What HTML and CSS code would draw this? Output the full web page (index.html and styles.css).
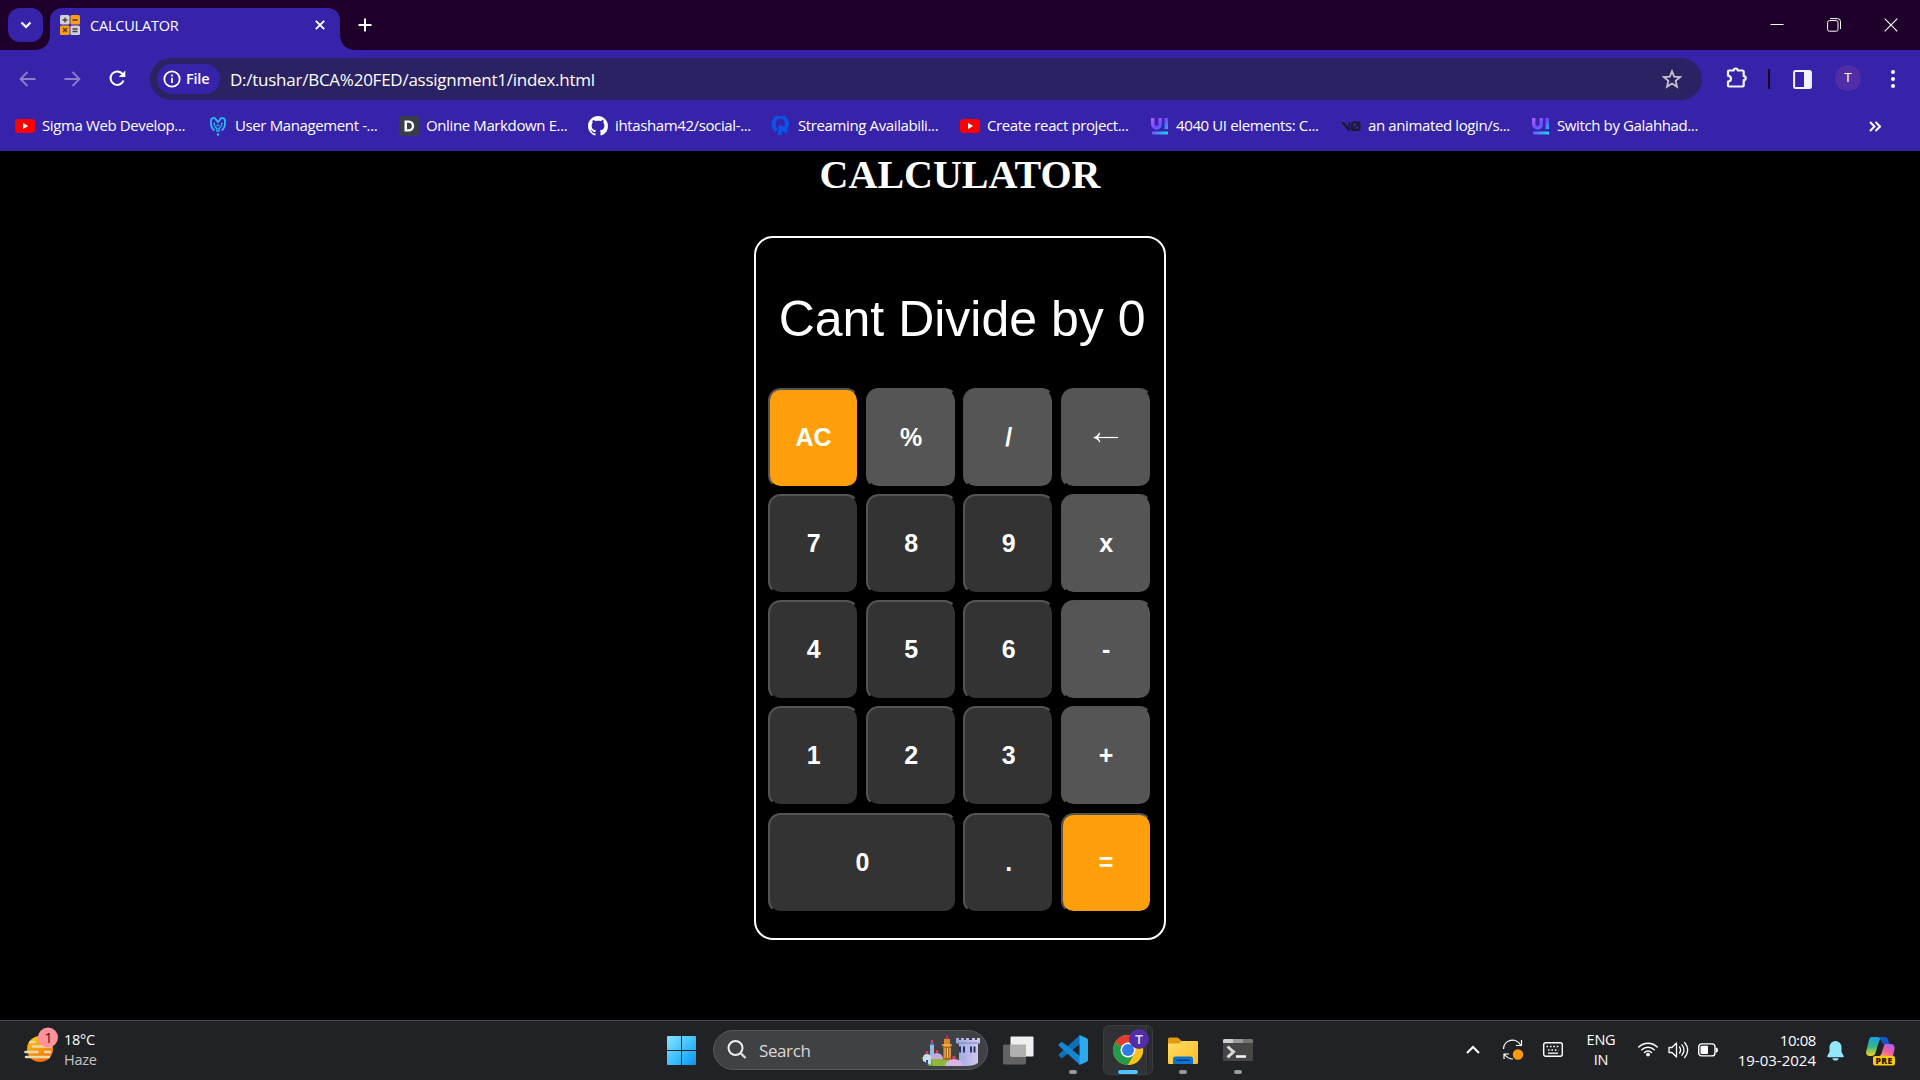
FILE: index.html
```html
<!DOCTYPE html>
<html lang="en">
<head>
<meta charset="utf-8">
<title>CALCULATOR</title>
<link rel="stylesheet" href="styles.css">
</head>
<body>
<svg width="0" height="0" class="defs" aria-hidden="true">
  <defs>
    <linearGradient id="gUi" x1="0" y1="0" x2="1" y2="1"><stop offset="0" stop-color="#b45cf5"/><stop offset=".55" stop-color="#6b4bff"/><stop offset="1" stop-color="#20b8f5"/></linearGradient>
    <linearGradient id="gBar" x1="0" x2="1"><stop offset="0" stop-color="#6a5cff"/><stop offset="1" stop-color="#12d8f5"/></linearGradient>
    <linearGradient id="gWin" gradientUnits="userSpaceOnUse" x1="0" y1="0" x2="29" y2="29"><stop offset="0" stop-color="#8be2ff"/><stop offset=".5" stop-color="#3fc3fb"/><stop offset="1" stop-color="#0a93f5"/></linearGradient>
    <linearGradient id="gSun" x1=".3" y1="0" x2=".7" y2="1"><stop offset="0" stop-color="#ffc510"/><stop offset="1" stop-color="#f26a10"/></linearGradient>
    <linearGradient id="gFold" x1="0" y1="0" x2="1" y2="1"><stop offset="0" stop-color="#ffdc62"/><stop offset="1" stop-color="#fdbd28"/></linearGradient>
    <linearGradient id="gTower" x1="0" x2="1"><stop offset="0" stop-color="#98a9dc"/><stop offset="1" stop-color="#d8c8f2"/></linearGradient>
    <linearGradient id="gCoA" x1="0" y1="0" x2="0" y2="1"><stop offset="0" stop-color="#1aa0e8"/><stop offset=".5" stop-color="#35b58b"/><stop offset="1" stop-color="#f5d516"/></linearGradient>
    <linearGradient id="gCoB" x1=".8" y1="0" x2=".2" y2="1"><stop offset="0" stop-color="#b05cf0"/><stop offset=".6" stop-color="#ef5fa0"/><stop offset="1" stop-color="#ff9a5a"/></linearGradient>
    <symbol id="yt" viewBox="0 0 20 20"><rect y="3" width="20" height="14" rx="3.5" fill="#f00"/><path d="M8 7l5.2 3L8 13z" fill="#fff"/></symbol>
    <symbol id="ui" viewBox="0 0 18 18"><path d="M0 1h3.500v6a2 2 0 0 0 4 0V1H11v6.200a5.300 5.300 0 0 1-11 0zM13.500 1H17v11h-3.500z" fill="url(#gUi)"/><path d="M1 14.500h16v3H2a1 1 0 0 1-1-1z" fill="url(#gBar)"/></symbol>
  </defs>
</svg>

<header class="browser">
  <div class="tabstrip">
    <button class="tab-search"><svg width="12" height="8" viewBox="0 0 12 8"><path d="M1.500 1.500L6 6l4.500-4.500" fill="none" stroke="#fff" stroke-width="2.200"/></svg></button>
    <div class="tab">
      <svg width="20" height="20" viewBox="0 0 20 20"><rect width="9.600" height="9.600" rx="1.500" fill="#cfd3d6"/><rect x="10.400" width="9.600" height="9.600" rx="1.500" fill="#ff9d0a"/><rect y="10.400" width="9.600" height="9.600" rx="1.500" fill="#ff9d0a"/><rect x="10.400" y="10.400" width="9.600" height="9.600" rx="1.500" fill="#cfd3d6"/><path d="M2.500 5h5M5 2.500v5M12.500 5h5M3 13l4 4M7 13l-4 4M12.500 14h5M12.500 16.500h5" stroke="#4a3a35" stroke-width="1.300"/></svg>
      <span class="tab-title">CALCULATOR</span>
      <svg class="tab-close" width="10" height="10" viewBox="0 0 10 10"><path d="M.8.8l8.400 8.400M9.200.8L.8 9.200" stroke="#fff" stroke-width="1.900"/></svg>
    </div>
    <svg class="new-tab" width="14" height="14" viewBox="0 0 14 14"><path d="M7 .5v13M.5 7h13" stroke="#fff" stroke-width="2"/></svg>
    <div class="window-controls">
      <svg width="14" height="14" viewBox="0 0 14 14"><path d="M.5 6.500h13" stroke="#fff"/></svg>
      <svg width="14" height="14" viewBox="0 0 14 14"><rect x=".6" y="2.600" width="10.400" height="10.600" rx="1.800" fill="none" stroke="#fff"/><path d="M3 .6h7.500a3 3 0 0 1 3 3V11" fill="none" stroke="#fff"/></svg>
      <svg width="14" height="14" viewBox="0 0 14 14"><path d="M.7.700l12.600 12.600M13.300.7L.7 13.300" stroke="#fff" stroke-width="1.100"/></svg>
    </div>
  </div>

  <div class="toolbar">
    <svg class="back" width="17" height="16" viewBox="0 0 17 16"><path d="M16.500 8H2M8.500 1L1.500 8l7 7" fill="none" stroke="#8d7ec9" stroke-width="1.800"/></svg>
    <svg class="forward" width="17" height="16" viewBox="0 0 17 16"><path d="M.5 8H15M8.500 1l7 7-7 7" fill="none" stroke="#8d7ec9" stroke-width="1.800"/></svg>
    <svg class="reload" width="17" height="17" viewBox="0 0 17 17"><path d="M14.500 10.500A6.700 6.700 0 1 1 13.600 4.200" fill="none" stroke="#fff" stroke-width="2"/><path d="M16.300.5v6.500h-6.500z" fill="#fff"/></svg>
    <div class="omnibox">
      <div class="chip">
        <svg width="18" height="18" viewBox="0 0 18 18"><circle cx="9" cy="9" r="7.700" fill="none" stroke="#fff" stroke-width="1.800"/><path d="M9 7.800V13M9 4.500v1.900" stroke="#fff" stroke-width="1.700"/></svg>
        <span>File</span>
      </div>
      <span class="url">D:/tushar/BCA%20FED/assignment1/index.html</span>
      <svg class="star" width="20" height="20" viewBox="0 0 20 20"><path d="M10 2.300l2.200 5.400 5.900.4-4.500 3.800 1.400 5.800-5-3.200-5 3.200 1.400-5.800L1.900 8.100l5.900-.4z" fill="none" stroke="#c5c4c8" stroke-width="1.800"/></svg>
    </div>
    <svg class="extensions" width="22" height="22" viewBox="0 0 22 22"><path d="M2 4.500a1 1 0 0 1 1-1h4.700a2 2 0 0 1 4 0h5a1 1 0 0 1 1 1v4.700a2 2 0 0 1 0 4v5.300a1 1 0 0 1-1 1H3a1 1 0 0 1-1-1v-3.800q3-.6 3-3t-3-3z" fill="none" stroke="#f1f1f8" stroke-width="2.200" stroke-linejoin="round"/></svg>
    <span class="divider"></span>
    <svg class="side-panel" width="19" height="19" viewBox="0 0 19 19"><rect x="1.100" y="1.100" width="16.800" height="16.800" rx="1.500" fill="none" stroke="#f4f4f8" stroke-width="2"/><path d="M11 1h7v17h-7z" fill="#f4f4f8"/></svg>
    <span class="avatar">T</span>
    <svg class="menu" width="4" height="18" viewBox="0 0 4 18"><g fill="#fff"><circle cx="2" cy="2" r="2"/><circle cx="2" cy="9" r="2"/><circle cx="2" cy="16" r="2"/></g></svg>
  </div>

  <nav class="bookmarks">
    <a class="bm"><svg width="20" height="20"><use href="#yt"/></svg><span>Sigma Web Develop...</span></a>
    <a class="bm"><svg width="20" height="20" viewBox="0 0 20 20"><path d="M6.500 14.500Q3 12 3 7V4.500a2.600 2.600 0 0 1 5-.8L10 6l2-2.300a2.600 2.600 0 0 1 5 .8V7q0 5-3.500 7.500" fill="none" stroke="#2db4f2" stroke-width="1.900"/><path d="M6 6.500q.5 5 3 6v3.500M14 6.500q-.5 5-3 6v3.500M8.500 9.500h3" fill="none" stroke="#2db4f2" stroke-width="1.400"/><circle cx="10" cy="18.600" r="1.300" fill="#2db4f2"/></svg><span>User Management -...</span></a>
    <a class="bm"><svg width="20" height="20" viewBox="0 0 20 20"><rect width="20" height="20" rx="3" fill="#373d49"/><path d="M5.500 4.500h4.200a5.500 5.500 0 0 1 0 11H5.500zM8 6.700v6.600h1.500a3.300 3.300 0 0 0 0-6.600z" fill="#fff" fill-rule="evenodd"/></svg><span>Online Markdown E...</span></a>
    <a class="bm"><svg width="20" height="20" viewBox="0 0 16 16"><path fill="#fff" d="M8 0C3.580 0 0 3.580 0 8c0 3.540 2.290 6.530 5.470 7.590.4.070.55-.17.55-.38 0-.19-.01-.82-.01-1.490-2.010.37-2.530-.49-2.690-.94-.09-.23-.48-.94-.82-1.130-.28-.15-.68-.52-.01-.53.63-.01 1.080.58 1.230.82.72 1.210 1.870.87 2.330.66.070-.52.28-.87.51-1.070-1.780-.2-3.640-.89-3.640-3.950 0-.87.31-1.590.82-2.150-.08-.2-.36-1.020.08-2.120 0 0 .67-.21 2.200.82.64-.18 1.320-.27 2-.27s1.360.09 2 .27c1.530-1.040 2.200-.82 2.200-.82.44 1.100.16 1.920.08 2.120.51.56.82 1.270.82 2.150 0 3.070-1.870 3.750-3.650 3.950.29.25.54.73.54 1.480 0 1.070-.01 1.930-.01 2.200 0 .21.15.46.55.38A8.010 8.010 0 0 0 16 8c0-4.420-3.580-8-8-8z"/></svg><span>ihtasham42/social-...</span></a>
    <a class="bm"><svg width="20" height="20" viewBox="0 0 20 20"><path d="M5.500 14.500Q2 11.500 2.800 7A6.600 6.600 0 1 1 12 13.500l4.500 2.200M10 9.500L8.500 19" fill="none" stroke="#0a55e6" stroke-width="4"/></svg><span>Streaming Availabili...</span></a>
    <a class="bm"><svg width="20" height="20"><use href="#yt"/></svg><span>Create react project...</span></a>
    <a class="bm"><svg width="18" height="18"><use href="#ui"/></svg><span>4040 UI elements: C...</span></a>
    <a class="bm"><svg width="20" height="12" viewBox="0 0 20 12"><path d="M0 2h3l4.500 5V2H9v9H7.500z" fill="#1a1b26"/><rect x="11" y="2.500" width="7.500" height="7.500" rx="2" fill="none" stroke="#1a1b26" stroke-width="2.200"/><path d="M11 10.500L19 2" stroke="#1a1b26" stroke-width="1.800"/></svg><span>an animated login/s...</span></a>
    <a class="bm"><svg width="18" height="18"><use href="#ui"/></svg><span>Switch by Galahhad...</span></a>
    <svg class="overflow" width="12" height="11" viewBox="0 0 12 11"><path d="M1 1l4.500 4.500L1 10M6.500 1L11 5.500 6.500 10" fill="none" stroke="#fff" stroke-width="2"/></svg>
  </nav>
</header>

<main class="page">
  <h1>CALCULATOR</h1>
  <section class="calculator">
    <div class="display">Cant Divide by 0</div>
    <div class="keys">
      <button class="key accent">AC</button><button class="key op">%</button><button class="key op">/</button><button class="key op"><svg width="26" height="12" viewBox="0 0 26 12"><path d="M2 6.500h23" stroke="#fff" stroke-width="1.200"/><path d="M0 6.500Q4.500 5 6.500 1.500l.8.500Q6.500 4.500 4.800 6.500q1.700 2 2.500 4.500l-.8.500Q4.500 8 0 6.500z" fill="#fff"/></svg></button>
      <button class="key">7</button><button class="key">8</button><button class="key">9</button><button class="key op">x</button>
      <button class="key">4</button><button class="key">5</button><button class="key">6</button><button class="key op">-</button>
      <button class="key">1</button><button class="key">2</button><button class="key">3</button><button class="key op">+</button>
      <button class="key wide">0</button><button class="key">.</button><button class="key accent">=</button>
    </div>
  </section>
</main>

<footer class="taskbar">
  <div class="weather">
    <svg width="36" height="36" viewBox="0 0 36 36"><circle cx="16" cy="22" r="13" fill="url(#gSun)"/><path d="M6.500 15h4M9 19.500h18M1.500 25h12M21 25h5M2 30h23" stroke="#e9d9a8" stroke-width="2.600" stroke-linecap="round"/><circle cx="24" cy="10.500" r="10" fill="#ff929c"/><text x="24.500" y="15.500" text-anchor="middle" class="badge-num">1</text></svg>
    <div class="weather-text"><span>18°C</span><span class="dim">Haze</span></div>
  </div>
  <div class="apps">
    <svg class="start" width="29" height="29" viewBox="0 0 29 29"><path d="M1 0h13v14H0V1a1 1 0 0 1 1-1zM15 0h13a1 1 0 0 1 1 1v13H15zM0 15h14v14H1a1 1 0 0 1-1-1zM15 15h14v13a1 1 0 0 1-1 1H15z" fill="url(#gWin)"/></svg>
    <div class="search">
      <svg width="20" height="20" viewBox="0 0 20 20"><circle cx="8.500" cy="8" r="7" fill="none" stroke="#eee" stroke-width="2"/><path d="M13.500 13l5 5" stroke="#ddd" stroke-width="2.400"/></svg>
      <span>Search</span>
      <svg class="castle" width="60" height="32" viewBox="0 0 60 32">
        <path d="M0 24l6-3 10 2 12 0v9H8z" fill="#6b9d2c"/><path d="M10 24q8-3 17 0l-2 8H12z" fill="#8eb93a"/>
        <path d="M9 11h4v13H9z" fill="#9db9de"/><path d="M8.500 11l2.500-4 2.500 4z" fill="#5773b3"/><circle cx="11" cy="7" r="1.300" fill="#e23b5c"/>
        <path d="M22 12h8v14h-8z" fill="#a86a24"/><path d="M23 5h6v8h-6z" fill="#d98b2b"/><path d="M24 5l2-5 2 5z" fill="#b23248"/><path d="M24 14v10M26.500 14v10M29 14v10" stroke="#ffc94b"/><path d="M21 11h10" stroke="#f6b24c" stroke-width="1.500"/>
        <path d="M10 25a6 6 0 0 1 12 0z" fill="#c9a9df"/><circle cx="16" cy="17.500" r="1.400" fill="#e23b5c"/>
        <path d="M2 24a4 4 0 0 1 8 0v7l-8-4z" fill="#c9ddf3"/><path d="M5 26h2v4H5z" fill="#27518f"/><circle cx="6" cy="18.500" r="1.400" fill="#e23b5c"/>
        <path d="M35 4h3v2h2V4h3v2h2V4h3v2h3V4h3v2h2V4h3v5l-2 1v19q-4 3-12 3H38V10l-3-1z" fill="url(#gTower)"/><path d="M36 9h22" stroke="#7286c2"/><path d="M39 12.500v6M43 12.500v6M50 12.500v6M53.500 12.500v6" stroke="#273463" stroke-width="2"/>
        <path d="M24 32a9 7 0 0 1 18 0z" fill="#d7b5e4"/><circle cx="33" cy="23.500" r="1.800" fill="#e23b5c"/>
      </svg>
    </div>
    <svg class="task-view" width="31" height="29" viewBox="0 0 31 29"><rect y="8.500" width="23" height="20" rx="1.500" fill="#626262"/><rect x="7.500" y=".5" width="23" height="20" rx="1" fill="#efefef"/><path d="M7.500 8.500H23v12H8.500a1 1 0 0 1-1-1z" fill="#b0b0b0"/></svg>
    <div class="app vscode"><svg width="30" height="30" viewBox="0 0 30 30"><path d="M22 0L1 19q-1 1 0 2l2 1.800q.8.600 1.700 0L22 9z" fill="#0e70b8"/><path d="M22 30L1 11q-1-1 0-2l2-1.800q.8-.6 1.700 0L22 21z" fill="#1686d0"/><path d="M21.500 0l7.300 3.300Q30 4 30 5v20q0 1-1.200 1.700L21.500 30z" fill="#2baaf2"/></svg><i></i></div>
    <div class="app chrome active"><svg width="42" height="42" viewBox="0 0 42 42"><g transform="translate(6 9)"><circle cx="15" cy="15" r="15" fill="#fbc116"/><path d="M15 15L2 7.500A15 15 0 0 1 28 7.500z" fill="#e33b2e"/><path d="M2 7.500A15 15 0 0 0 15 30l6.500-11.200L15 15z" fill="#269a48"/><path d="M15 7.500h13a15 15 0 0 1-13 22.500l6.500-11.300z" fill="#fbc116"/><circle cx="15" cy="15" r="7.500" fill="#fff"/><circle cx="15" cy="15" r="6" fill="#3079ea"/></g><circle cx="32" cy="13" r="10" fill="#512da8"/><text x="32" y="18" text-anchor="middle" class="badge-t">T</text></svg><i></i></div>
    <div class="app folder"><svg width="30" height="28" viewBox="0 0 30 28"><path d="M0 2a1.500 1.500 0 0 1 1.500-1.500H9q1 0 2 1L13.500 4H28v10H0z" fill="#e09b13"/><path d="M0 6.500h11L14 4h15q1 0 1 1v21q0 1-1 1H1q-1 0-1-1z" fill="url(#gFold)"/><path d="M5 27v-5a2.500 2.500 0 0 1 2.500-2.500h15A2.500 2.500 0 0 1 25 22v5z" fill="#0e74cf"/><path d="M9 23.300h12" stroke="#07427f" stroke-width="1.400" stroke-linecap="round"/></svg><i></i></div>
    <div class="app terminal"><svg width="30" height="24" viewBox="0 0 30 24"><rect y="1" width="30" height="22" rx="1.500" fill="#464646"/><path d="M1 1h9v4H0V2z" fill="#d0d0d0"/><path d="M10 1h10v4H10z" fill="#9a9a9a"/><path d="M20 1h9l1 1v3H20z" fill="#727272"/><path d="M4.500 8.500l6 5.300-6 5.500" fill="none" stroke="#d8d8d8" stroke-width="3"/><path d="M13 18.500h10" stroke="#f2f2f2" stroke-width="2.600"/></svg><i></i></div>
  </div>
  <div class="tray">
    <svg class="chev" width="14" height="9" viewBox="0 0 14 9"><path d="M1 8l6-6 6 6" fill="none" stroke="#fff" stroke-width="2"/></svg>
    <svg class="sync" width="22" height="22" viewBox="0 0 22 22"><path d="M1.500 10A9 9 0 0 1 18.500 6M19.500 1v5.500H14M2 20v-5h5M2.500 15.500Q6 20 11 20" fill="none" stroke="#fff" stroke-width="1.200"/><circle cx="16" cy="15.500" r="5.200" fill="#ff9a0a"/></svg>
    <svg class="keyboard" width="20" height="15" viewBox="0 0 20 15"><rect x=".7" y=".7" width="18.600" height="13.600" rx="2" fill="none" stroke="#fff" stroke-width="1.400"/><path d="M3.500 4.500h13M5 8h10.500" stroke="#fff" stroke-width="1.600" stroke-dasharray="1.600 1.800"/><path d="M5 11.200h10" stroke="#fff" stroke-width="1.300"/></svg>
    <div class="lang"><span>ENG</span><span>IN</span></div>
    <svg class="wifi" width="20" height="16" viewBox="0 0 20 16"><path d="M.8 6A13 13 0 0 1 19.200 6M3.800 8.800a8.800 8.800 0 0 1 12.400 0M6.600 11.500a4.800 4.800 0 0 1 6.800 0" fill="none" stroke="#fff" stroke-width="1.500" stroke-linecap="round"/><circle cx="10" cy="13.600" r="1.900" fill="#fff"/></svg>
    <svg class="volume" width="21" height="18" viewBox="0 0 21 18"><path d="M1 6.500h3L8.500 2v14L4 11.500H1z" fill="none" stroke="#fff" stroke-width="1.300" stroke-linejoin="round"/><path d="M11.500 6q2.200 3 0 6M14 3.800q4 5.200 0 10.400M16.700 1.500q6 7.500 0 15" fill="none" stroke="#fff" stroke-width="1.300" stroke-linecap="round"/></svg>
    <svg class="battery" width="20" height="14" viewBox="0 0 20 14"><rect x=".7" y=".9" width="16.300" height="12" rx="3" fill="none" stroke="#fff" stroke-width="1.400"/><rect x="2.500" y="2.800" width="7.500" height="8.200" rx="1" fill="#fff"/><path d="M18 4.500q2 0 2 2.500t-2 2.500z" fill="#fff"/></svg>
    <div class="clock"><span class="time">10:08</span><span>19-03-2024</span></div>
    <svg class="bell" width="17" height="20" viewBox="0 0 17 20"><path d="M8.500 0a6 6 0 0 1 6 6v5l2.200 4q.4 1.200-1 1.200H1.300Q0 16.200.3 15l2.200-4V6a6 6 0 0 1 6-6zM5.500 17.300h6a3 2.300 0 0 1-6 0z" fill="#93e7fd"/></svg>
    <svg class="copilot" width="30" height="30" viewBox="0 0 30 30"><path d="M5 1h12q-3 1-4.500 6l-3 10q-1 3-4 3H3q-4-1-2.500-6L3 4q.6-2.500 2-3z" fill="url(#gCoA)"/><path d="M12 1h7q2.500 0 3.500 4l1 3h-6.500q-1-4-5-7z" fill="#1257d0"/><path d="M19 8h7q3 1 2.500 5l-1.500 7H13q2 0 3-4l1.500-5q.3-2 1.500-3z" fill="url(#gCoB)"/><rect x="7" y="20" width="22" height="9.500" rx="2" fill="#ffca0a"/><text x="18" y="27.800" text-anchor="middle" class="pre">PRE</text></svg>
  </div>
</footer>
</body>
</html>
```
FILE: styles.css
```css
* { box-sizing: border-box; }
body {
  margin: 0;
  height: 1080px;
  display: grid;
  grid-template-rows: 151px 869px 60px;
  overflow: hidden;
  background: #000;
  color: #fff;
  font-family: "Open Sans", "Noto Sans", sans-serif;
}
svg { display: block; flex: none; }
.defs { position: absolute; }
button { font: inherit; color: inherit; padding: 0; }

/* Browser chrome */
.browser { background: #3623a9; overflow: hidden; }
.tabstrip {
  height: 50px;
  display: flex;
  align-items: center;
  padding-left: 8px;
  background: #1f002b;
}
.tab-search {
  width: 35px;
  height: 34px;
  display: grid;
  place-items: center;
  border: 0;
  border-radius: 12px;
  background: #3623a9;
}
.tab {
  position: relative;
  align-self: flex-end;
  width: 290px;
  height: 42px;
  margin-left: 7px;
  padding: 0 15px 8px 10px;
  display: flex;
  align-items: center;
  border-radius: 12px 12px 0 0;
  background: #3623a9;
}
.tab::before, .tab::after {
  content: "";
  position: absolute;
  bottom: 0;
  width: 14px;
  height: 14px;
}
.tab::before { left: -14px; background: radial-gradient(circle at 0 0, transparent 13.500px, #3623a9 14px); }
.tab::after { right: -14px; background: radial-gradient(circle at 100% 0, transparent 13.500px, #3623a9 14px); }
.tab-title { margin-left: 10px; font-size: 14.500px; letter-spacing: -.2px; }
.tab-close { margin-left: auto; }
.new-tab { margin-left: 18px; }
.window-controls { margin-left: auto; margin-right: 22px; display: flex; gap: 43px; }

.toolbar { height: 58px; padding-top: 8px; display: flex; align-items: flex-start; }
.toolbar > svg { margin-top: 13px; }
.back { margin-left: 19px; }
.forward { margin-left: 28px; }
.toolbar > .reload { margin-left: 28px; margin-top: 12px; }
.omnibox {
  width: 1552px;
  height: 42px;
  margin-left: 24px;
  padding: 0 20px 0 7px;
  display: flex;
  align-items: center;
  border-radius: 21px;
  background: #2b2263;
}
.chip {
  width: 63px;
  height: 30px;
  padding-left: 6px;
  display: flex;
  align-items: center;
  gap: 5px;
  border-radius: 15px;
  background: #3623a9;
  font-size: 14.500px;
  font-weight: 600;
  letter-spacing: -.2px;
}
.chip span { margin-top: -2px; }
.url { margin-left: 10px; font-size: 17px; letter-spacing: -.25px; }
.star { margin-left: auto; }
.toolbar > .extensions { margin-left: 24px; margin-top: 9px; }
.divider { width: 2px; height: 20px; margin: 11px 0 0 20px; background: #1f002b; }
.toolbar > .side-panel { margin-left: 23px; margin-top: 12px; }
.avatar {
  width: 26px;
  height: 26px;
  margin: 7px 0 0 23px;
  border-radius: 50%;
  background: #512da8;
  font: 13px/26px Roboto, sans-serif;
  text-align: center;
}
.toolbar > .menu { margin-left: 30px; margin-top: 12px; }

.bookmarks {
  height: 43px;
  padding: 0 39px 7px 15px;
  display: grid;
  grid-template-columns: 193px 191px 189px 183px 189px 191px 190px 191px 1fr 12px;
  align-items: center;
  font-size: 15px;
  letter-spacing: -.38px;
}
.bm { display: flex; align-items: center; white-space: nowrap; }
.bm span { margin: -3px 0 0 7px; }

/* Calculator page */
.page { overflow: hidden; display: flex; flex-direction: column; align-items: center; }
h1 { margin: 1px 0 38px; font: bold 40px/46px "Liberation Serif", serif; }
.calculator {
  width: 412px;
  height: 704px;
  padding: 0 12px;
  border: 2px solid #fff;
  border-radius: 19px;
  font-family: "Liberation Sans", sans-serif;
}
.display { height: 149.600px; padding: 52px 6.500px 0 0; font-size: 50px; line-height: 58px; text-align: right; white-space: nowrap; }
.keys { display: grid; grid-template-columns: repeat(4, 91.250px); grid-auto-rows: 100px; gap: 6.250px; }
.key {
  display: grid;
  place-items: center;
  padding-bottom: 1px;
  border: 2px outset #000;
  border-radius: 12.500px;
  background: #333;
  font-size: 25px;
  font-weight: bold;
}
.op { background: #555; }
.accent { background: #ff9f0c; }
.wide { grid-column: span 2; }

/* Taskbar */
.taskbar {
  display: grid;
  grid-template-columns: 667px 799px 1fr;
  border-top: 1px solid #46474a;
  background: #212225;
  font-size: 14.500px;
}
.weather { display: flex; padding: 6px 0 0 24px; }
.weather-text { margin: 3px 0 0 4px; display: flex; flex-direction: column; line-height: 20px; letter-spacing: -.25px; }
.dim { color: #c4c4c4; }
.badge-num { font-size: 14px; fill: #2b1418; }
.apps { display: flex; }
.start { margin-top: 15px; }
.search {
  width: 275px;
  height: 40px;
  margin: 9px 0 0 17px;
  padding: 0 6px 0 13px;
  display: flex;
  align-items: center;
  border: 1px solid #57585c;
  border-radius: 20px;
  background: #404145;
  color: #d8d8d8;
  font-size: 17px;
  letter-spacing: -.4px;
}
.search span { margin-left: 12px; }
.castle { margin-left: auto; }
.task-view { margin: 15px 0 0 15px; }
.app { width: 50px; height: 50px; margin-top: 4px; display: flex; flex-direction: column; align-items: center; justify-content: space-between; padding: 10px 0 1px; }
.app i { width: 8px; height: 4px; border-radius: 2px; background: #999; }
.vscode { margin-left: 14px; }
.chrome {
  margin-left: 5px;
  padding-top: 1px;
  border: 1px solid #3b3c3f;
  border-radius: 6px;
  background: linear-gradient(90deg, #303134 42px, #3b3c3f 42px 43px, #232427 43px 44px, #2b2c2f 44px);
}
.chrome svg { margin-top: -1px; }
.active i { width: 20px; background: #4cc2ff; }
.chrome i { margin-bottom: -1px; }
.folder { margin-left: 5px; padding-top: 12px; }
.terminal { margin-left: 5px; padding-top: 13px; }
.badge-t { font: bold 13px Roboto, sans-serif; fill: #d9cdf2; }
.tray { display: flex; }
.chev { margin-top: 24px; }
.sync { margin: 18px 0 0 22px; }
.keyboard { margin: 21px 0 0 19px; }
.lang, .clock { display: flex; flex-direction: column; line-height: 20px; padding-top: 9px; }
.lang { width: 40px; margin-left: 18px; align-items: center; letter-spacing: -.2px; }
.wifi { margin: 20px 0 0 17px; }
.volume { margin: 20px 0 0 10px; }
.battery { margin: 22px 0 0 9px; }
.clock { width: 98px; align-items: flex-end; font-size: 15px; letter-spacing: 0; }
.time { letter-spacing: -.4px; }
.bell { margin: 20px 0 0 11px; }
.copilot { margin: 15px 0 0 22px; }
.pre { font: 800 8.500px "Open Sans", sans-serif; fill: #1d1800; letter-spacing: .4px; }
```
